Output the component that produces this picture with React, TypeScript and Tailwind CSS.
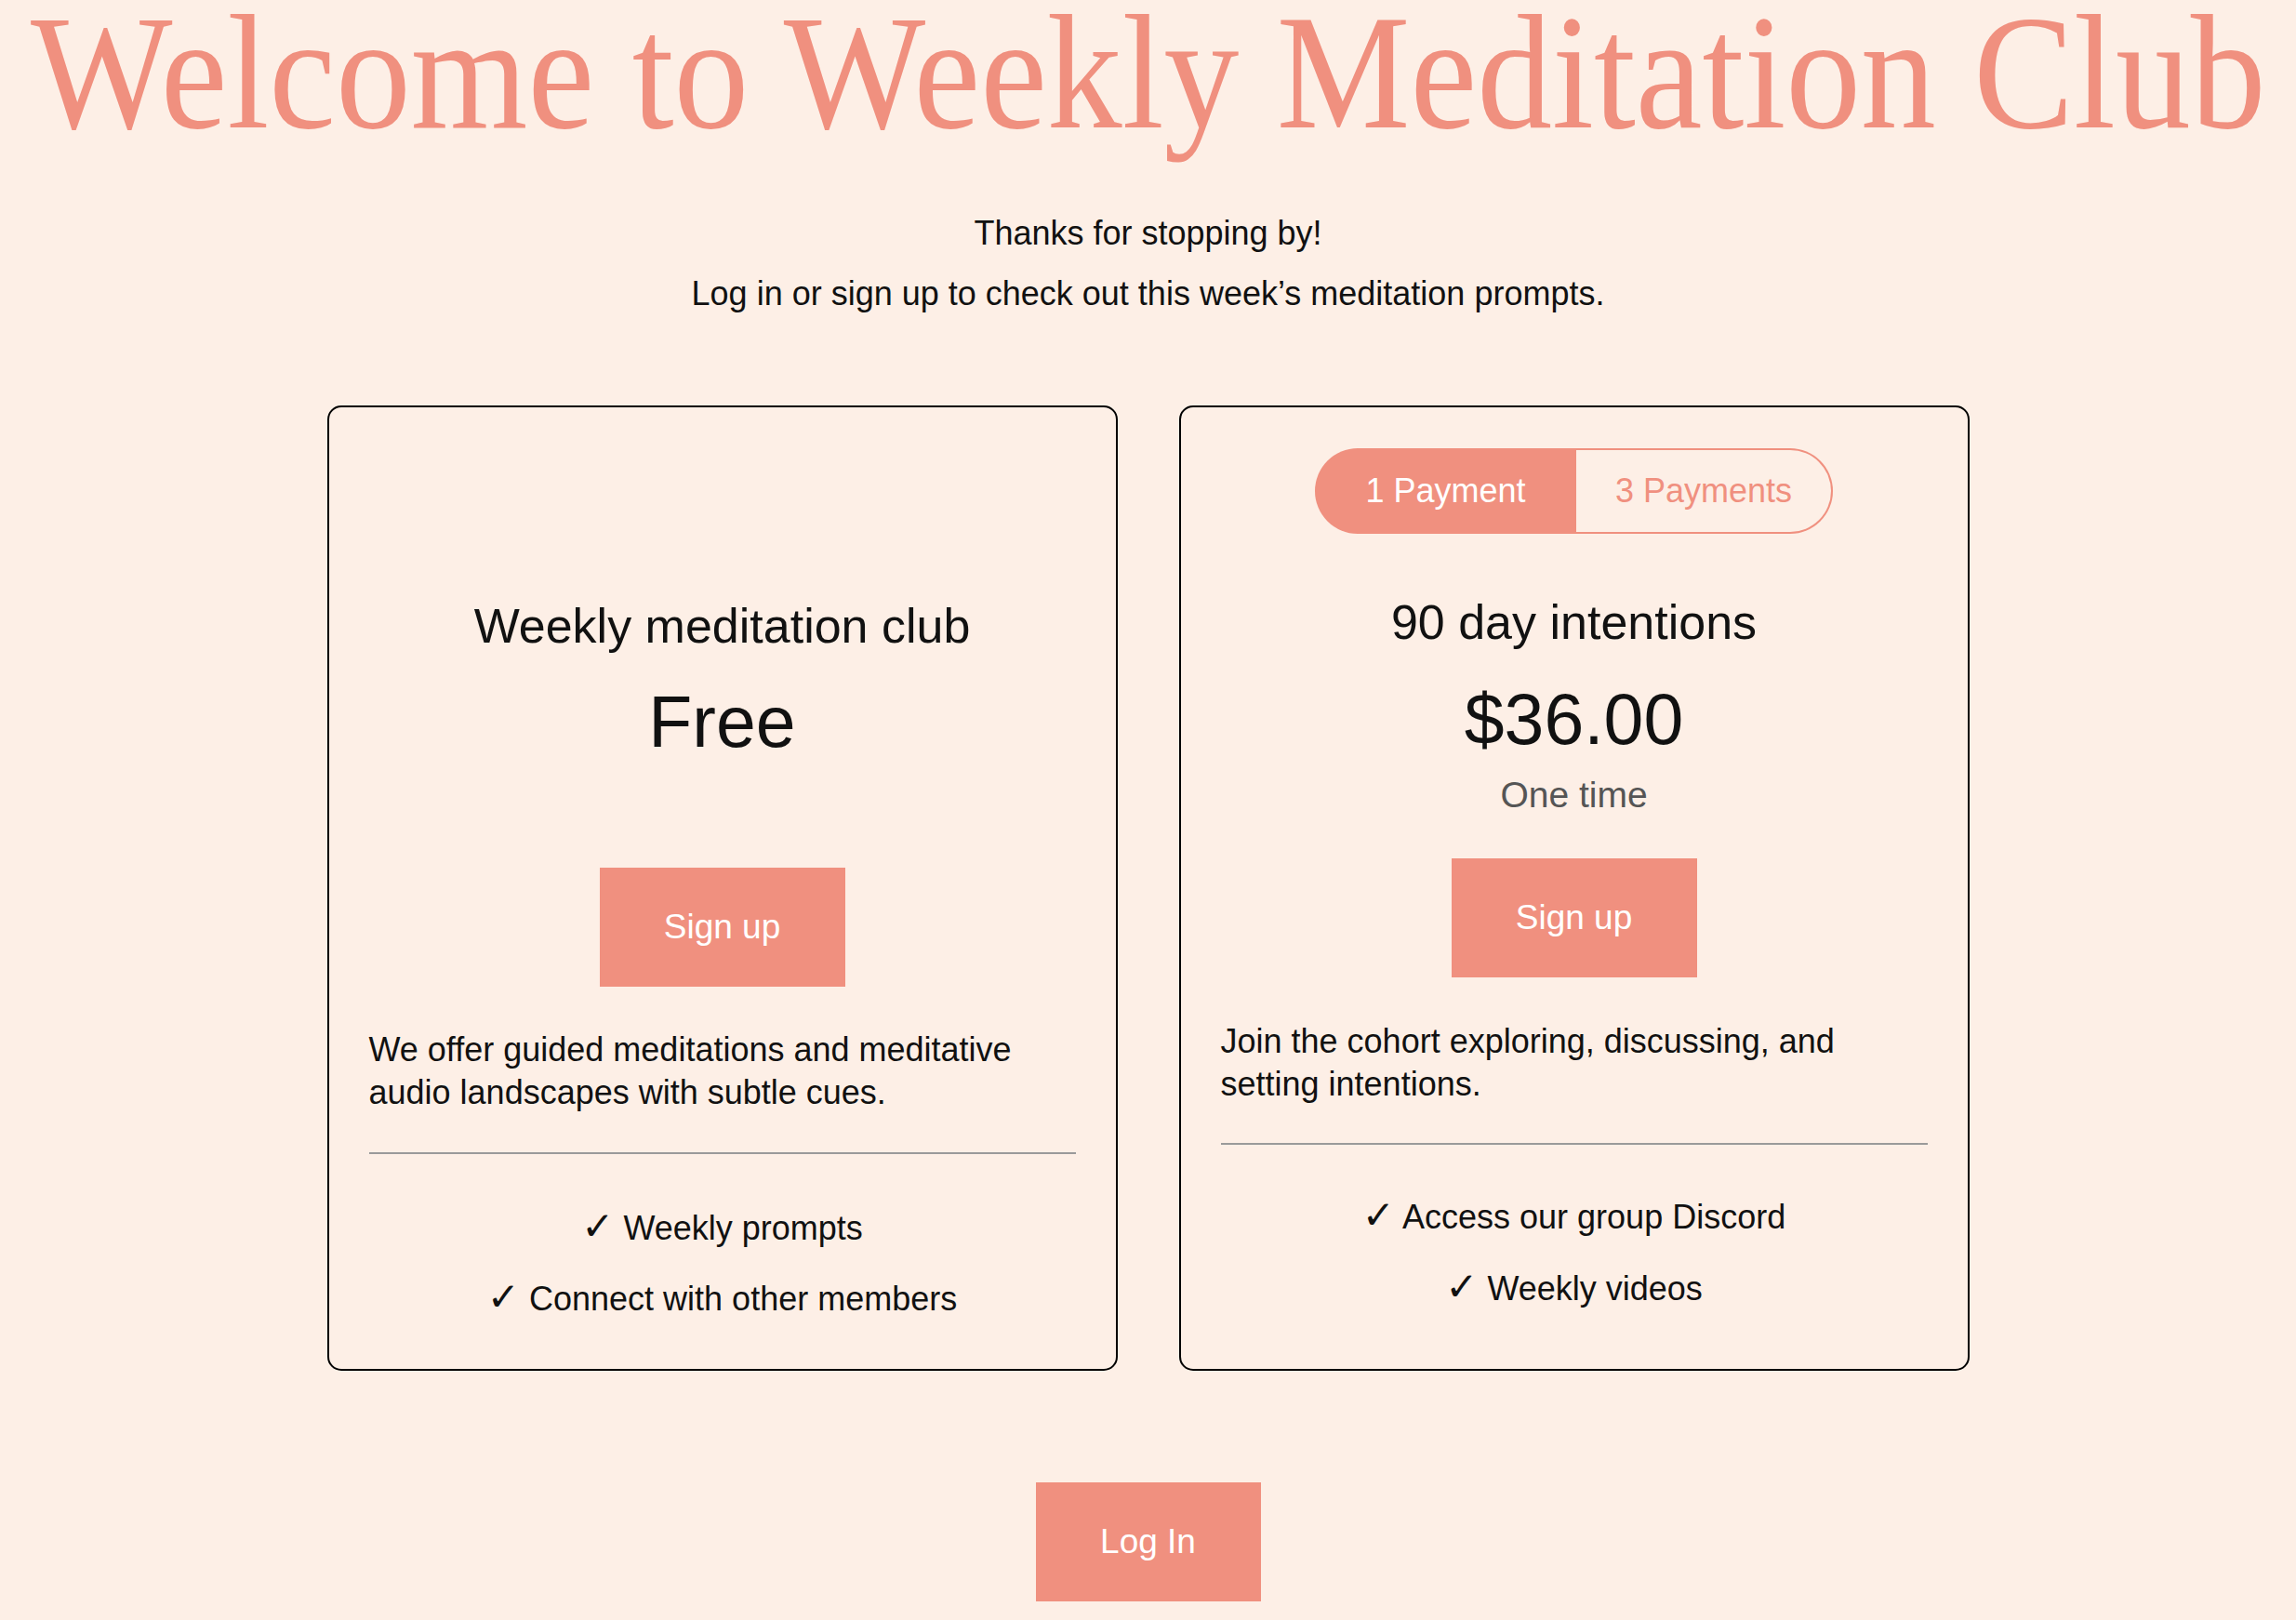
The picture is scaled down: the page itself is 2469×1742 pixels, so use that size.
import { useState } from "react";

const salmon = "bg-[#F0907F]";

function Feature({ text }: { text: string }) {
  return (
    <li>
      <span className="font-['DejaVu_Sans',sans-serif] font-bold text-[42px] leading-none">✓</span> {text}
    </li>
  );
}

export default function App() {
  const [plan, setPlan] = useState<"one" | "three">("one");

  return (
    <div className="min-h-screen bg-[#FDEFE6] font-['Liberation_Sans',Arial,sans-serif] text-[#111]">
      {/* Titre */}
      <h1 className="pt-[3px] text-center font-['Liberation_Serif','Times_New_Roman',serif] text-[160px] leading-[150px] text-[#F0907F] whitespace-nowrap">
        <span className="inline-block scale-x-[1.01] scale-y-[1.1]">Welcome to Weekly Meditation Club</span>
      </h1>

      <div className="mt-[65px] text-center text-[36px] leading-[65px]">
        <p>Thanks for stopping by!</p>
        <p>Log in or sign up to check out this week’s meditation prompts.</p>
      </div>

      {/* Cartes */}
      <div className="mt-[88px] flex justify-center gap-[66px]">
        <div className="w-[850px] h-[1038px] rounded-[15px] border-2 border-black px-[43px] pt-[203px] flex flex-col">
          <h2 className="text-center text-[52px] leading-[64px]">Weekly meditation club</h2>
          <p className="mt-[26px] text-center text-[77px] leading-[90px]">Free</p>
          <button className={`mt-[112px] self-center w-[264px] h-[128px] ${salmon} text-white text-[37px]`}>
            Sign up
          </button>
          <p className="mt-[45px] text-[36px] leading-[46px]">
            We offer guided meditations and meditative
            <br />
            audio landscapes with subtle cues.
          </p>
          <div className="mt-[41px] h-[2px] bg-[#9a9a9a]" />
          <ul className="mt-[57px] flex flex-col gap-[30px] text-center text-[36px] leading-[46px]">
            <Feature text="Weekly prompts" />
            <Feature text="Connect with other members" />
          </ul>
        </div>

        <div className="w-[850px] h-[1038px] rounded-[15px] border-2 border-black px-[43px] pt-[44px] flex flex-col">
          <div className="self-center flex h-[92px] text-[36px]">
            <button
              onClick={() => setPlan("one")}
              className={`w-[281px] rounded-l-full ${plan === "one" ? "bg-[#F0907F] text-white" : "border-2 border-r-0 border-[#F0907F] text-[#F0907F]"}`}
            >
              1 Payment
            </button>
            <button
              onClick={() => setPlan("three")}
              className={`w-[276px] rounded-r-full ${plan === "three" ? "bg-[#F0907F] text-white" : "border-2 border-l-0 border-[#F0907F] text-[#F0907F]"}`}
            >
              3 Payments
            </button>
          </div>
          <h2 className="mt-[63px] text-center text-[52px] leading-[64px]">90 day intentions</h2>
          <p className="mt-[27px] text-center text-[77px] leading-[90px]">{plan === "one" ? "$36.00" : "$12.00"}</p>
          <p className="mt-[15px] text-center text-[39px] leading-[44px] text-[#555]">
            {plan === "one" ? "One time" : "Per month"}
          </p>
          <button className={`mt-[46px] self-center w-[264px] h-[128px] ${salmon} text-white text-[37px]`}>
            Sign up
          </button>
          <p className="mt-[46px] text-[36px] leading-[46px]">
            Join the cohort exploring, discussing, and
            <br />
            setting intentions.
          </p>
          <div className="mt-[40px] h-[2px] bg-[#9a9a9a]" />
          <ul className="mt-[55px] flex flex-col gap-[31px] text-center text-[36px] leading-[46px]">
            <Feature text="Access our group Discord" />
            <Feature text="Weekly videos" />
          </ul>
        </div>
      </div>

      <div className="mt-[120px] flex justify-center">
        <button className={`w-[242px] h-[128px] ${salmon} text-white text-[37px]`}>Log In</button>
      </div>
    </div>
  );
}
